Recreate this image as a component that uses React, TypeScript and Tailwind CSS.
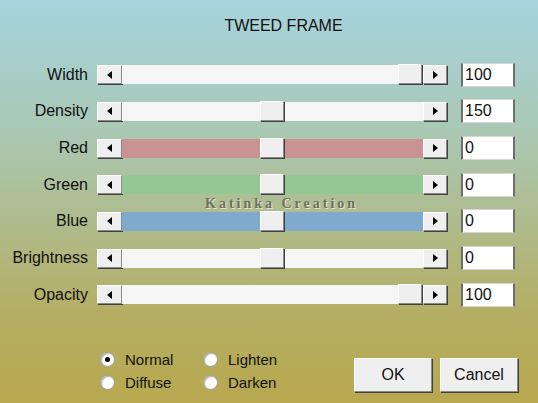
const rows = [
  { label: "Width", value: "100", pos: 1, track: "bg-[#f6f6f6]" },
  { label: "Density", value: "150", pos: 0.5, track: "bg-[#f6f6f6]" },
  { label: "Red", value: "0", pos: 0.5, track: "bg-[#c99394]" },
  { label: "Green", value: "0", pos: 0.5, track: "bg-[#93c794]" },
  { label: "Blue", value: "0", pos: 0.5, track: "bg-[#80a9ce]" },
  { label: "Brightness", value: "0", pos: 0.5, track: "bg-[#f6f6f6]" },
  { label: "Opacity", value: "100", pos: 1, track: "bg-[#f6f6f6]" },
];

const raised =
  "bg-[#efefef] border border-t-white border-l-white border-r-[#8a8a8a] border-b-[#8a8a8a] shadow-[1px_1px_0_#404040]";

const Arrow = ({ dir }: { dir: "left" | "right" }) => (
  <svg width="5" height="8" viewBox="0 0 5 8">
    {dir === "left" ? <path d="M5 0 L0 4 L5 8 Z" fill="#000" /> : <path d="M0 0 L5 4 L0 8 Z" fill="#000" />}
  </svg>
);

const Slider = ({ pos, track }: { pos: number; track: string }) => (
  <div className="flex h-[19px] w-[350px]">
    <div className={`${raised} w-[25px] h-full flex items-center justify-center`}>
      <Arrow dir="left" />
    </div>
    <div className={`relative flex-1 h-full ${track}`}>
      <div
        className={`${raised} absolute -top-[1px] w-[24px] h-[20px]`}
        style={{ left: pos * 276 }}
      />
    </div>
    <div className={`${raised} w-[24px] h-full flex items-center justify-center`}>
      <Arrow dir="right" />
    </div>
  </div>
);

const Radio = ({ label, checked }: { label: string; checked?: boolean }) => (
  <div className="flex items-center h-[23px] gap-[10px]">
    <div className="w-[15px] h-[15px] rounded-full bg-white border border-[#9c9c9c] shadow-[inset_1px_1px_1px_#b0b0b0] flex items-center justify-center">
      {checked && <div className="w-[5px] h-[5px] rounded-full bg-black" />}
    </div>
    <span className="text-[15px] leading-none text-[#111]">{label}</span>
  </div>
);

export default function App() {
  return (
    <div
      className="relative w-[538px] h-[403px] overflow-hidden text-[#111]"
      style={{
        fontFamily: '"Liberation Sans", Arial, sans-serif',
        background:
          "linear-gradient(180deg, #a6d3dd 0%, #a9c9b8 30%, #afbb8c 55%, #b4ae63 78%, #b8a84f 100%)",
      }}
    >
      <div className="pt-[17px] pl-[29px] flex justify-center">
        <span className="text-[16px] leading-[18px]">TWEED FRAME</span>
      </div>

      <div className="mt-[21.5px] flex flex-col">
        {rows.map((r) => (
          <div key={r.label} className="h-[36.67px] flex items-center">
            <div className="w-[88px] text-right text-[16px] leading-none">{r.label}</div>
            <div className="ml-[9px]">
              <Slider pos={r.pos} track={r.track} />
            </div>
            <div className="ml-[14px] w-[54px] h-[24px] bg-white border-x-2 border-x-[#6e6e6e] border-y border-y-[#d6d6d6] flex items-center pl-[2px] text-[16px] leading-none">
              {r.value}
            </div>
          </div>
        ))}
      </div>

      <div className="mt-[33px] flex items-start pl-[100px] pr-[20px]">
        <div className="pt-[2px] grid grid-cols-[103px_auto]">
          <Radio label="Normal" checked />
          <Radio label="Lighten" />
          <Radio label="Diffuse" />
          <Radio label="Darken" />
        </div>
        <div className="ml-auto mt-[12px] flex gap-[8px]">
          <button className={`${raised} w-[78px] h-[34px] text-[16px]`}>OK</button>
          <button className={`${raised} w-[78px] h-[34px] text-[16px]`}>Cancel</button>
        </div>
      </div>

      <div
        className="absolute left-[205px] top-[197px] text-[14px] font-bold leading-none tracking-[3px] text-[#707058] [text-shadow:1px_1px_0_#e4e4d4]"
        style={{ fontFamily: '"Liberation Serif", "Times New Roman", serif' }}
      >
        Katinka Creation
      </div>
    </div>
  );
}
